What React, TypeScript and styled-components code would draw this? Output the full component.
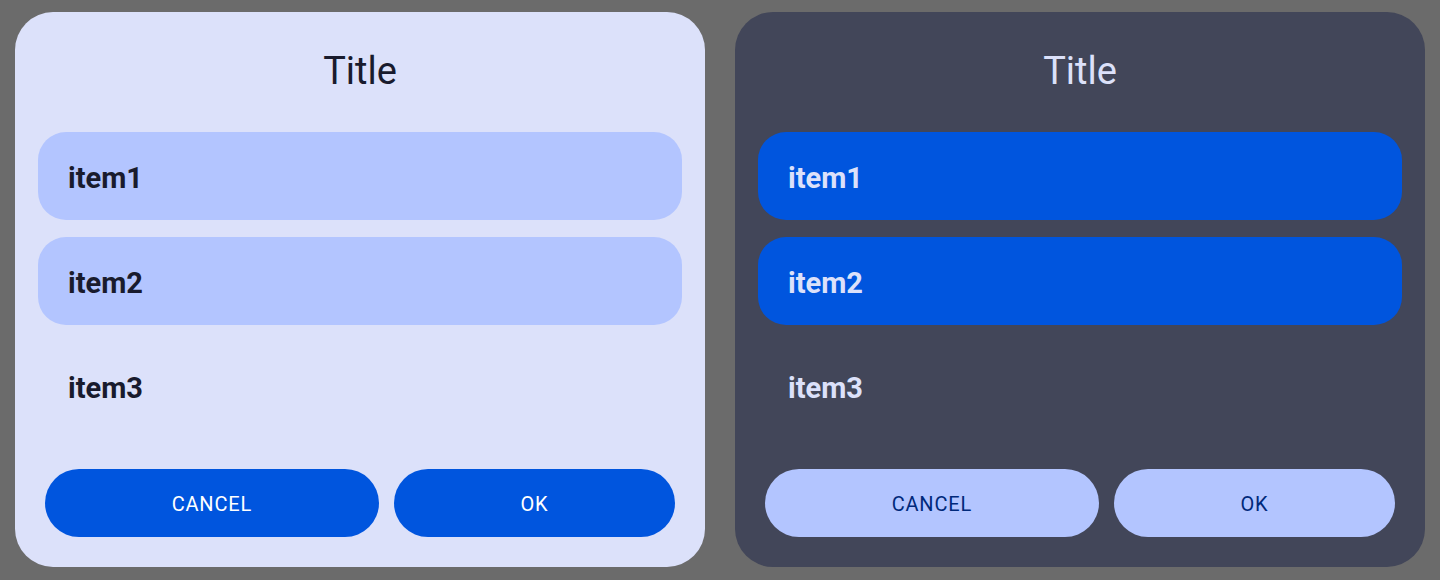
import styled, { createGlobalStyle } from "styled-components";

const GlobalStyle = createGlobalStyle`
    html, body {
        margin: 0;
        padding: 0;
        background: #6b6b6b;
        font-family: Roboto, "Noto Sans", sans-serif;
    }
`;

const Page = styled.div`
    display: flex;
    gap: 30px;
    padding: 12px 15px 13px;
    height: 580px;
    box-sizing: border-box;
`;

interface IDark {
    $dark?: boolean
}

const Dialog = styled.div<IDark>`
    flex: 1;
    display: flex;
    flex-direction: column;
    border-radius: 38px;
    background: ${({ $dark }) => ($dark ? "#424659" : "#dce1fa")};
    color: ${({ $dark }) => ($dark ? "#dce1fa" : "#191b2d")};
    padding: 0 23px 30px;
`;

const Title = styled.div`
    font-size: 38px;
    line-height: 44px;
    text-align: center;
    padding-top: 37px;
    margin-bottom: 39px;
`;

const List = styled.div`
    display: flex;
    flex-direction: column;
    gap: 17px;
`;

const Item = styled.div<IDark & { $selected?: boolean }>`
    height: 88px;
    box-sizing: border-box;
    border-radius: 28px;
    display: flex;
    align-items: center;
    padding: 3px 0 0 30px;
    font-size: 29px;
    font-weight: 700;
    background: ${({ $selected, $dark }) =>
        !$selected ? "transparent" : $dark ? "#0055de" : "#b3c5ff"};
`;

const Actions = styled.div`
    display: flex;
    gap: 15px;
    margin-top: auto;
    padding: 0 7px;
`;

const Button = styled.button<IDark>`
    flex: 1 1 auto;
    height: 68px;
    border: none;
    border-radius: 34px;
    font-family: Roboto, sans-serif;
    font-size: 20px;
    letter-spacing: 0.8px;
    text-transform: uppercase;
    padding: 2px 24px 0;
    background: ${({ $dark }) => ($dark ? "#b3c5ff" : "#0055de")};
    color: ${({ $dark }) => ($dark ? "#00297a" : "#ffffff")};
`;

const ListDialog = ({ dark }: { dark?: boolean }) => (
    <Dialog $dark={dark}>
        <Title>Title</Title>
        <List>
            <Item $dark={dark} $selected>item1</Item>
            <Item $dark={dark} $selected>item2</Item>
            <Item $dark={dark}>item3</Item>
        </List>
        <Actions>
            <Button $dark={dark}>Cancel</Button>
            <Button $dark={dark}>OK</Button>
        </Actions>
    </Dialog>
);

export default function App() {
    return (
        <>
            <GlobalStyle />
            <Page>
                <ListDialog />
                <ListDialog dark />
            </Page>
        </>
    );
}
